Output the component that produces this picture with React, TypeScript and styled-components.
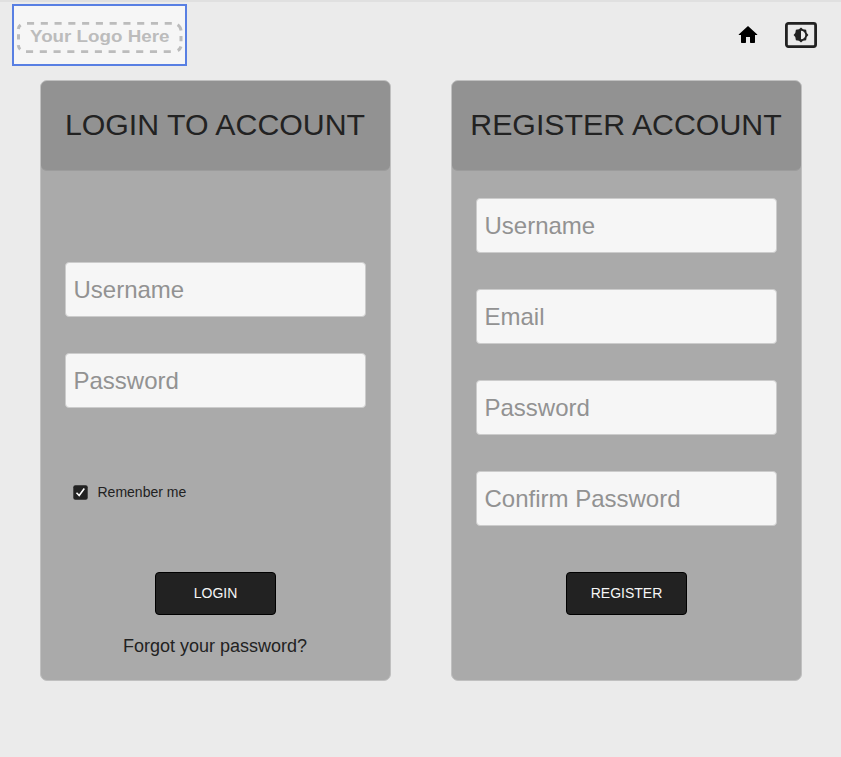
import React from "react";
import styled, { createGlobalStyle } from "styled-components";

const GlobalStyle = createGlobalStyle`
  *, *::before, *::after { box-sizing: border-box; }
  body {
    margin: 0;
    background: #ebebeb;
    color: #222;
    font-family: "Liberation Sans", Arial, sans-serif;
  }
`;

const Page = styled.div`
  height: 757px;
  border-top: 2px solid #e0e0e0;
  overflow: hidden;
`;

const Header = styled.header`
  display: flex;
  justify-content: space-between;
  align-items: flex-start;
  height: 78px;
  padding: 2px 24px 0 12px;
`;

const LogoFrame = styled.a`
  display: block;
  width: 175px;
  height: 62px;
  border: 2px solid #587fe3;
  background: #f6f6f6;
  svg { display: block; }
`;

const Nav = styled.nav`
  display: flex;
  align-items: center;
  gap: 25px;
  height: 62px;
  svg { display: block; }
`;

const Cards = styled.main`
  display: flex;
  gap: 60px;
  padding-left: 40px;
`;

const Card = styled.section`
  width: 351px;
  height: 601px;
  border: 1px solid #c0c0c0;
  border-radius: 7px;
  background: #aaa;
`;

const Title = styled.h1`
  display: flex;
  align-items: center;
  justify-content: center;
  height: 90px;
  margin: 0;
  padding: 0 1px 2px 0;
  border-bottom: 1px solid #9c9c9c;
  border-radius: 6px;
  background: #929292;
  font-size: 30.3px;
  font-weight: 400;
  white-space: nowrap;
`;

const Form = styled.form<{ $top: number }>`
  display: flex;
  flex-direction: column;
  align-items: center;
  padding-top: ${(p) => p.$top}px;
`;

const Fields = styled.div`
  display: grid;
  gap: 36px;
`;

const Field = styled.input`
  width: 301px;
  height: 55px;
  padding: 0 7.5px;
  border: 1px solid #ccc;
  border-radius: 4px;
  background: #f6f6f6;
  color: #222;
  font: 24px "Liberation Sans", Arial, sans-serif;
  outline: none;
  &::placeholder { color: #929292; opacity: 1; }
`;

const Remember = styled.label`
  display: flex;
  align-items: center;
  align-self: flex-start;
  gap: 9.5px;
  height: 16px;
  margin: 76px 0 0 32px;
  font-size: 14px;
  svg { display: block; }
`;

const Submit = styled.button<{ $gap: number }>`
  width: 121px;
  height: 43px;
  margin-top: ${(p) => p.$gap}px;
  padding: 0 0 2px;
  border: 1px solid #000;
  border-radius: 4px;
  background: #222;
  color: #f6f6f6;
  font: 14px "Liberation Sans", Arial, sans-serif;
`;

const Forgot = styled.a`
  margin-top: 20px;
  padding-right: 1px;
  color: #222;
  font-size: 18px;
  line-height: 22px;
`;

const Logo = () => (
  <svg width="171" height="58" viewBox="14 6 171 58">
    <g fill="none" stroke="#bcbcbc" strokeWidth="2.8">
      <path d="M27 23.3H172" strokeDasharray="7.1 6.67" />
      <path d="M26 51.7H171" strokeDasharray="7.1 6.67" />
      <path d="M18.5 34.3V39.4M181 36V41.2" strokeWidth="3" />
      <path d="M18.3 29Q18.6 26.5 20.6 25M18.3 45.2Q18.6 48 20.2 49.4M177.6 24.8Q180.4 26.4 181.1 30.4M181 46.5Q180.2 49.2 177.8 50.6" strokeWidth="3" />
    </g>
    <text x="30" y="42.2" fill="#bcbcbc" fontFamily="Liberation Sans" fontWeight="700" fontSize="17" textLength="139.5" lengthAdjust="spacingAndGlyphs">Your Logo Here</text>
  </svg>
);

const HomeIcon = () => (
  <svg width="24" height="24" viewBox="0 0 24 24" aria-label="Home">
    <path d="M12 3 2.7 11.4Q2.6 12 3.2 12H5V19.3Q5 20 5.7 20H9.3Q10 20 10 19.3V14H14V19.3Q14 20 14.7 20H18.3Q19 20 19 19.3V12H20.8Q21.4 12 21.3 11.4Z" />
  </svg>
);

const BrightnessIcon = () => (
  <svg width="32" height="26" viewBox="0 0 32 26" aria-label="Theme">
    <rect x="1.4" y="1.4" width="29.2" height="23.2" rx="2" fill="none" stroke="#222" strokeWidth="2.8" />
    <path fill="#222" fillRule="evenodd" d="M16 5.6 18 7.3 21.1 7.8 21.7 11 23.4 13 21.7 15 21.1 18.2 18 18.7 16 20.4 14 18.7 10.9 18.2 10.3 15 8.6 13 10.3 11 10.9 7.8 14 7.3ZM16 8.7V17.3A4.3 4.3 0 0 0 16 8.7Z" />
  </svg>
);

const Check = () => (
  <svg width="15" height="15" viewBox="0 0 15 15">
    <rect x=".3" y=".3" width="14.4" height="14.4" rx="2" fill="#222" />
    <path d="M3.5 7.8 6.2 10.5 11.3 3.6" fill="none" stroke="#fff" strokeWidth="1.6" />
  </svg>
);

export default function App() {
  return (
    <>
      <GlobalStyle />
      <Page>
        <Header>
          <LogoFrame><Logo /></LogoFrame>
          <Nav><HomeIcon /><BrightnessIcon /></Nav>
        </Header>
        <Cards>
          <Card>
            <Title>LOGIN TO ACCOUNT</Title>
            <Form $top={91}>
              <Fields>
                <Field placeholder="Username" />
                <Field type="password" placeholder="Password" />
              </Fields>
              <Remember><Check />Remenber me</Remember>
              <Submit type="button" $gap={72}>LOGIN</Submit>
              <Forgot>Forgot your password?</Forgot>
            </Form>
          </Card>
          <Card>
            <Title>REGISTER ACCOUNT</Title>
            <Form $top={27}>
              <Fields>
                <Field placeholder="Username" />
                <Field type="email" placeholder="Email" />
                <Field type="password" placeholder="Password" />
                <Field type="password" placeholder="Confirm Password" />
              </Fields>
              <Submit type="button" $gap={46}>REGISTER</Submit>
            </Form>
          </Card>
        </Cards>
      </Page>
    </>
  );
}
